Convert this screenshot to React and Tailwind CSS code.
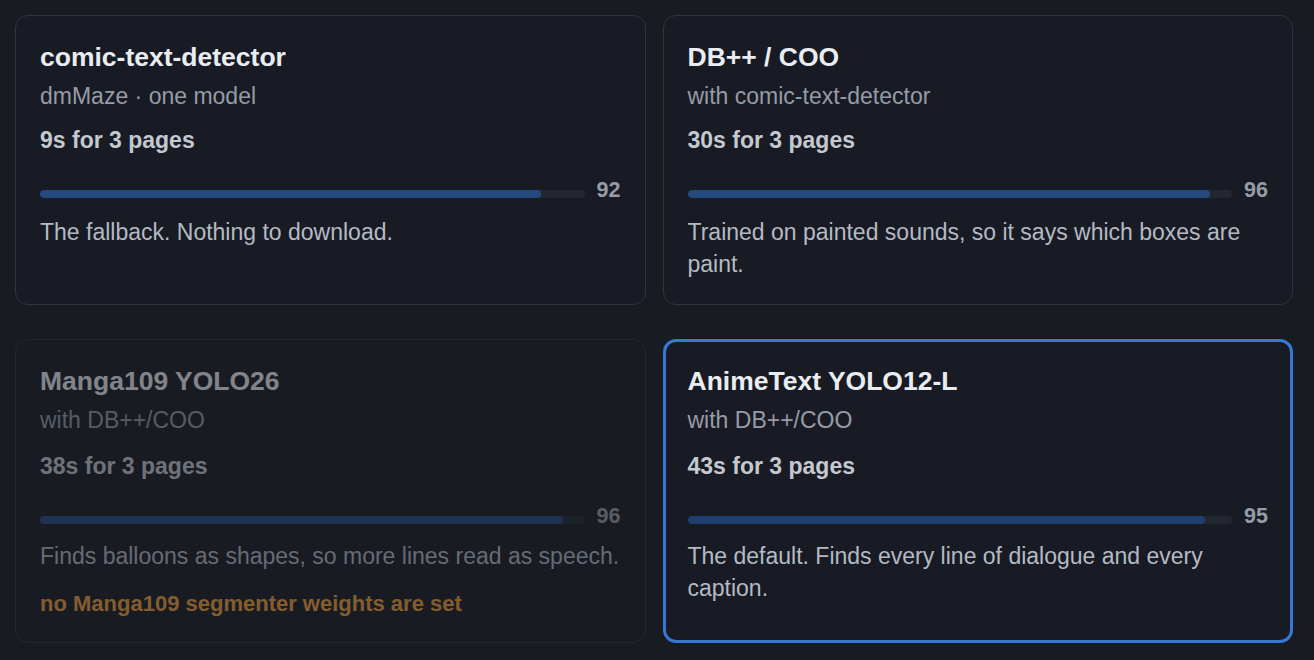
import React from "react";

const cards = [
  {
    title: "comic-text-detector",
    sub: "dmMaze · one model",
    time: "9s for 3 pages",
    score: 92,
    desc: "The fallback. Nothing to download.",
  },
  {
    title: "DB++ / COO",
    sub: "with comic-text-detector",
    time: "30s for 3 pages",
    score: 96,
    desc: "Trained on painted sounds, so it says which boxes are paint.",
  },
  {
    title: "Manga109 YOLO26",
    sub: "with DB++/COO",
    time: "38s for 3 pages",
    score: 96,
    desc: "Finds balloons as shapes, so more lines read as speech.",
    warn: "no Manga109 segmenter weights are set",
    disabled: true,
    low: true,
  },
  {
    title: "AnimeText YOLO12-L",
    sub: "with DB++/COO",
    time: "43s for 3 pages",
    score: 95,
    desc: "The default. Finds every line of dialogue and every caption.",
    selected: true,
    low: true,
  },
];

function Card({ c }) {
  const base = "rounded-[13px] bg-[#181b23] flex flex-col";
  const border = c.selected
    ? "border-[3px] border-[#3678d4] p-[22px]"
    : "border border-[#2e333c] p-[24px]";
  return (
    <div className={`${base} ${border} ${c.disabled ? "opacity-50" : ""}`}>
      <div className="text-[26.5px] leading-[34px] font-bold text-[#e9edf2]">{c.title}</div>
      <div className="mt-[8px] text-[23px] leading-[28px] text-[#969ca5]">{c.sub}</div>
      <div className={`${c.low ? "mt-[18px]" : "mt-[16px]"} text-[23px] leading-[28px] font-bold text-[#c4c9d0]`}>
        {c.time}
      </div>
      <div className="mt-[23px] flex items-end gap-[12px]">
        <div className="flex-1 h-[8px] mb-[5px] rounded-full bg-[#232830] overflow-hidden">
          <div
            className={`h-full rounded-full ${c.selected ? "bg-[#1f3f70]" : "bg-[#254a80]"}`}
            style={{ width: `${c.score}%` }}
          />
        </div>
        <div className="text-[21.5px] leading-[26px] font-bold text-[#969ca5] text-right">{c.score}</div>
      </div>
      <div className={`${c.low ? "mt-[11px]" : "mt-[13px]"} text-[23px] leading-[32px] text-[#b4bac3]`}>
        {c.desc}
      </div>
      {c.warn && (
        <div className="mt-[18px] text-[22px] leading-[28px] font-bold text-[#ec9f3f]">{c.warn}</div>
      )}
    </div>
  );
}

export default function App() {
  return (
    <div
      className="w-[1314px] h-[660px] bg-[#181b22] pl-[15px] pr-[21px] pt-[15px]"
      style={{ fontFamily: '"Liberation Sans", Arial, sans-serif' }}
    >
      <div className="grid grid-cols-2 gap-x-[17px] gap-y-[34px]">
        {cards.map((c) => (
          <Card key={c.title} c={c} />
        ))}
      </div>
    </div>
  );
}
